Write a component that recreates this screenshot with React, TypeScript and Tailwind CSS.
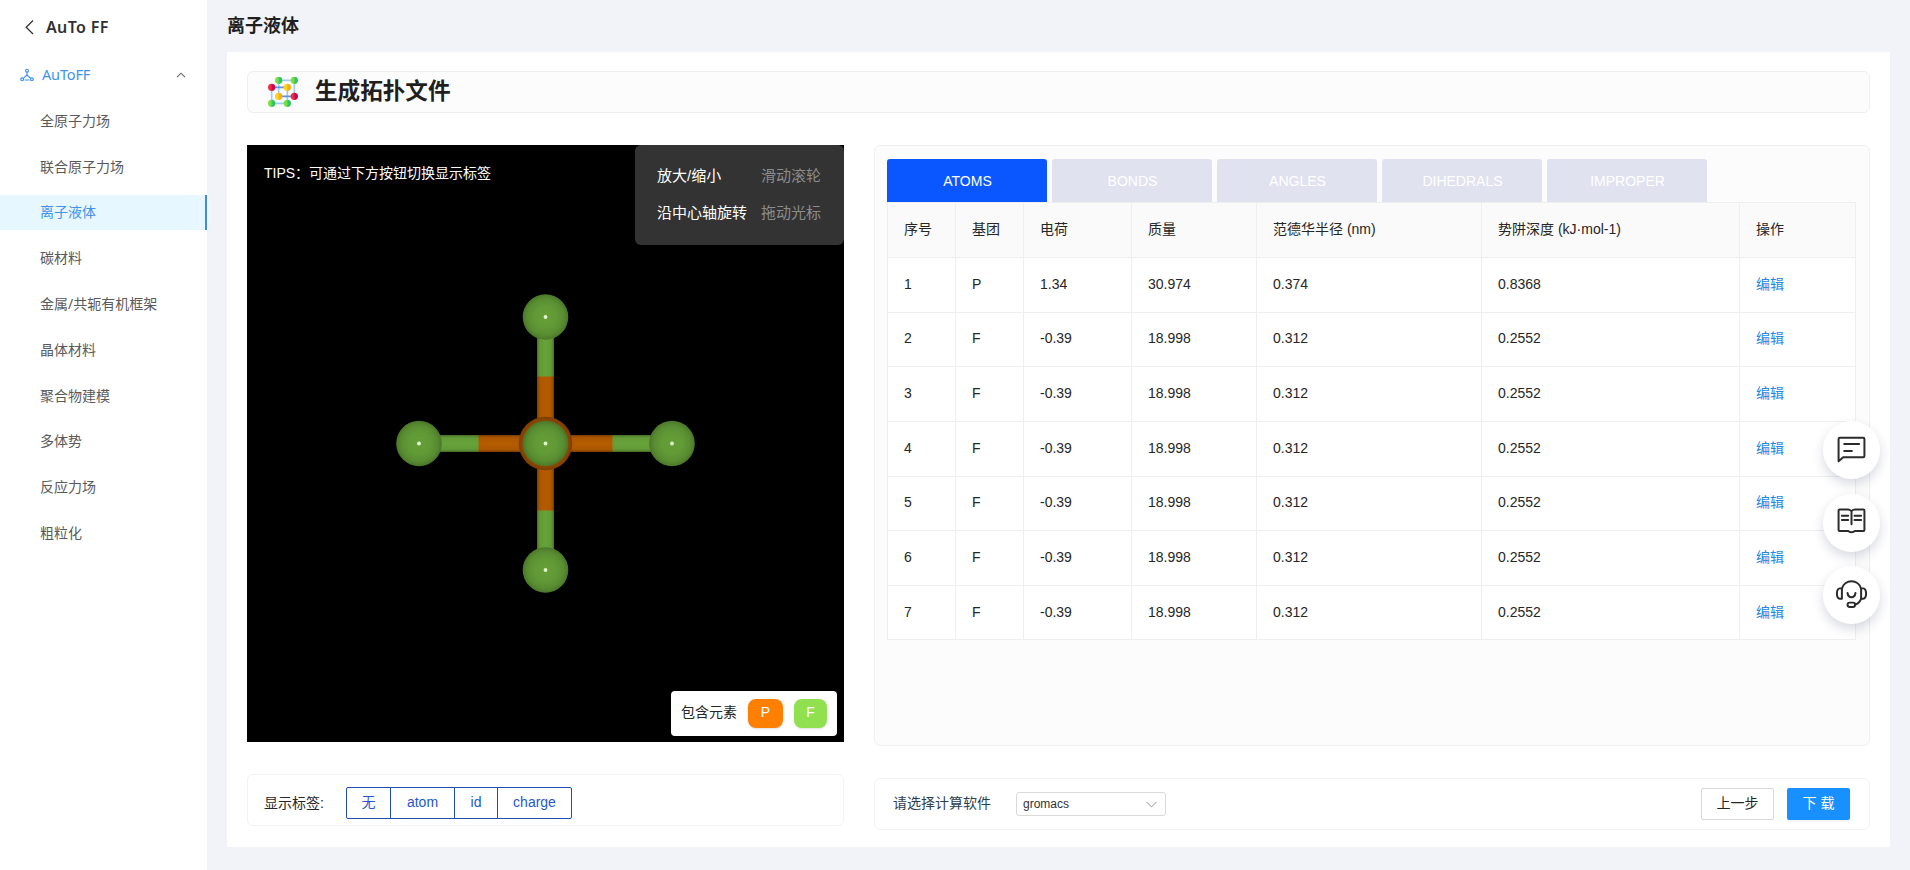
import React from "react";

const menuItems = [
  "全原子力场",
  "联合原子力场",
  "离子液体",
  "碳材料",
  "金属/共轭有机框架",
  "晶体材料",
  "聚合物建模",
  "多体势",
  "反应力场",
  "粗粒化",
];

const tabs = ["ATOMS", "BONDS", "ANGLES", "DIHEDRALS", "IMPROPER"];

const columns = ["序号", "基团", "电荷", "质量", "范德华半径 (nm)", "势阱深度 (kJ·mol-1)", "操作"];

const rows = [
  ["1", "P", "1.34", "30.974", "0.374", "0.8368"],
  ...["2", "3", "4", "5", "6", "7"].map((n) => [n, "F", "-0.39", "18.998", "0.312", "0.2552"]),
];

const gridCols = "grid grid-cols-[68px_68px_108px_125px_225px_258px_116px]";

function MoleculeNavIcon() {
  return (
    <svg className="h-[14px] w-[14px] shrink-0" viewBox="0 0 42 42" fill="none" stroke="#3f94e9" strokeWidth="3.6">
      <circle cx="21" cy="8" r="4.2" />
      <circle cx="6.5" cy="34" r="4.2" />
      <circle cx="35.5" cy="34" r="4.2" />
      <path d="M21 12v10M21 21L10 31M21 21L32 31M14 36h14" />
    </svg>
  );
}

function LatticeIcon() {
  const dots: [number, number, string][] = [
    [32, 10, "url(#lg)"],
    [79, 10, "url(#lg)"],
    [11, 31, "url(#lr)"],
    [58, 31, "url(#ly)"],
    [32, 58, "url(#ly)"],
    [79, 58, "url(#lr)"],
    [11, 79, "url(#lg)"],
    [58, 79, "url(#lg)"],
  ];
  return (
    <svg className="h-[30px] w-[30px] shrink-0" viewBox="0 0 90 90" fill="none">
      <defs>
        <linearGradient id="lg">
          <stop offset="0.35" stopColor="#7ee03f" />
          <stop offset="0.65" stopColor="#2bc662" />
        </linearGradient>
        <linearGradient id="lr">
          <stop offset="0.35" stopColor="#f02f45" />
          <stop offset="0.65" stopColor="#c4094f" />
        </linearGradient>
        <linearGradient id="ly">
          <stop offset="0.35" stopColor="#ffd21f" />
          <stop offset="0.65" stopColor="#f7ae12" />
        </linearGradient>
      </defs>
      <path d="M32 10H79V58M11 31V79H58M32 10V58M58 31V79" stroke="#a0ccf0" strokeWidth="5" />
      <path d="M11 31H58M32 58H79" stroke="#5b94e0" strokeWidth="5" />
      {dots.map(([x, y, f], i) => (
        <circle key={i} cx={x} cy={y} r="11" fill={f} />
      ))}
    </svg>
  );
}

function Molecule() {
  const ends = [
    [0, -126.5],
    [-126.5, 0],
    [126.5, 0],
    [0, 126.5],
    [0, 0],
  ];
  return (
    <svg className="block h-[597px] w-[597px]" viewBox="-298.5 -298.5 597 597">
      <defs>
        <radialGradient id="f">
          <stop offset="0" stopColor="#669f38" />
          <stop offset="0.5" stopColor="#619936" />
          <stop offset="0.8" stopColor="#588c31" />
          <stop offset="1" stopColor="#4a7629" />
        </radialGradient>
        <radialGradient id="p">
          <stop offset="0.7" stopColor="#a05000" />
          <stop offset="1" stopColor="#7c3d00" />
        </radialGradient>
        <linearGradient id="bf" x1="0" y1="0" x2="0" y2="1">
          <stop offset="0" stopColor="#4f7b2d" />
          <stop offset="0.18" stopColor="#639b37" />
          <stop offset="0.5" stopColor="#67a23a" />
          <stop offset="0.82" stopColor="#639b37" />
          <stop offset="1" stopColor="#4f7b2d" />
        </linearGradient>
        <linearGradient id="bp" x1="0" y1="0" x2="0" y2="1">
          <stop offset="0" stopColor="#884400" />
          <stop offset="0.18" stopColor="#ad5700" />
          <stop offset="0.5" stopColor="#b45b00" />
          <stop offset="0.82" stopColor="#ad5700" />
          <stop offset="1" stopColor="#884400" />
        </linearGradient>
      </defs>
      {[0, 90, 180, 270].map((a) => (
        <g key={a} transform={`rotate(${a})`}>
          <rect x="20" y="-8.4" width="47.5" height="16.8" fill="url(#bp)" />
          <rect x="67" y="-8.4" width="45" height="16.8" fill="url(#bf)" />
        </g>
      ))}
      <circle r="26.8" fill="url(#p)" />
      {ends.map(([x, y], i) => (
        <g key={i}>
          <circle cx={x} cy={y} r="22.8" fill="url(#f)" />
          <circle cx={x} cy={y} r="1.9" fill="#dff5cc" />
        </g>
      ))}
    </svg>
  );
}

function FloatButton({ children }: { children: React.ReactNode }) {
  return (
    <div className="h-[58px] w-[57px] rounded-full bg-white shadow-[0_5px_12px_rgba(40,50,90,0.18)]">
      <svg
        className="h-full w-full"
        viewBox="0 0 172 174"
        fill="none"
        stroke="#2b2b2b"
        strokeWidth="6"
        strokeLinecap="round"
        strokeLinejoin="round"
      >
        {children}
      </svg>
    </div>
  );
}

function LabelButton({ label, className }: { label: string; className: string }) {
  return (
    <button
      className={`flex h-8 items-center justify-center border border-[#1f4fb0] bg-white pb-[2px] text-sm text-[#2458cc] ${className}`}
    >
      {label}
    </button>
  );
}

export default function App() {
  return (
    <div className="relative flex h-[870px] w-[1910px] overflow-hidden bg-[#f2f3f8] font-['Liberation_Sans','Noto_Sans_CJK_SC',sans-serif] text-sm text-[#262626]">
      <aside className="flex h-full w-[207px] shrink-0 flex-col bg-white font-['Noto_Sans','Noto_Sans_CJK_SC',sans-serif]">
        <div className="flex h-[54px] items-center pl-[25px]">
          <svg className="h-4 w-2.5 shrink-0" viewBox="0 0 10 16" fill="none" stroke="#333" strokeWidth="1.3">
            <path d="M8 1.5L1.2 8.2L8 15" />
          </svg>
          <span className="ml-[11px] text-base font-semibold tracking-[0.35px] text-[#303133]">AuTo FF</span>
        </div>
        <div className="flex h-[42px] items-center pb-[1px] pl-5 text-[#3f94e9]">
          <MoleculeNavIcon />
          <span className="ml-2 w-[134px] pb-[1px] text-[14.5px] tracking-[-0.15px]">AuToFF</span>
          <svg className="h-[6px] w-[10px]" viewBox="0 0 10 6" fill="none" stroke="#666" strokeWidth="1.1">
            <path d="M1 5.2L5 1.2L9 5.2" />
          </svg>
        </div>
        <nav className="flex flex-col gap-[10.8px] pt-[7.4px]">
          {menuItems.map((m, i) => (
            <div
              key={m}
              className={
                i === 2
                  ? "flex h-[35px] items-center border-r-2 border-[#3d8ddb] bg-[#e6f7ff] pl-10 text-[#3f94e9]"
                  : "flex h-[35px] items-center pl-10 text-[#5a5a5a]"
              }
            >
              {m}
            </div>
          ))}
        </nav>
      </aside>

      <main className="flex flex-1 flex-col pr-5 pl-5">
        <h1 className="flex h-[52px] items-center text-lg font-bold text-[#1f1f1f]">离子液体</h1>
        <section className="flex h-[795px] flex-col bg-white px-5 pt-[19px]">
          <div className="flex h-[42px] items-center rounded-md border border-[#efefef] bg-[#fcfcfc] pl-5">
            <LatticeIcon />
            <h2 className="ml-[17px] text-[22.6px] leading-8 font-bold text-[#1f1f1f]">生成拓扑文件</h2>
          </div>

          <div className="mt-8 flex justify-between">
            <div className="flex w-[597px] flex-col">
              <div className="relative h-[597px] bg-black">
                <Molecule />
                <div className="absolute top-[18px] left-[17px] text-white">TIPS：可通过下方按钮切换显示标签</div>
                <div className="absolute top-0 right-0 grid h-[100px] w-[209px] grid-cols-[104px_1fr] grid-rows-[37px_37px] rounded-md bg-[#333] pt-3 pl-[22px] text-[15px] text-white">
                  <span className="self-center whitespace-nowrap">放大/缩小</span>
                  <span className="self-center text-[#8c8c8c]">滑动滚轮</span>
                  <span className="self-center whitespace-nowrap">沿中心轴旋转</span>
                  <span className="self-center text-[#8c8c8c]">拖动光标</span>
                </div>
                <div className="absolute right-[7px] bottom-[6px] flex h-[45px] w-[166px] items-center rounded bg-white pl-[10px]">
                  <span className="w-[67px] pb-[3px]">包含元素</span>
                  <span className="flex h-[29px] w-[35px] items-center justify-center rounded-lg bg-[#ff8000] pb-[3px] text-white shadow">
                    P
                  </span>
                  <span className="ml-[11px] flex h-[29px] w-[33px] items-center justify-center rounded-lg bg-[#90e050] pb-[3px] text-white shadow">
                    F
                  </span>
                </div>
              </div>
              <div className="mt-8 flex h-[52px] items-center rounded-md border border-[#f3f3f3] pl-[16px]">
                <span className="w-[82px] pt-[5px]">显示标签:</span>
                <div className="flex pt-[6px]">
                  <LabelButton label="无" className="w-[45px] rounded-l-[2px]" />
                  <LabelButton label="atom" className="-ml-px w-[65px]" />
                  <LabelButton label="id" className="-ml-px w-[44px]" />
                  <LabelButton label="charge" className="-ml-px w-[75px] rounded-r-[2px]" />
                </div>
              </div>
            </div>

            <div className="flex w-[996px] flex-col">
              <div className="h-[601px] rounded-md border border-[#efefef] bg-[#fcfcfc] pt-[13px] pl-3">
                <div className="flex gap-[5px]">
                  {tabs.map((t, i) => (
                    <div
                      key={t}
                      className={
                        i === 0
                          ? "flex h-[43px] w-[160px] items-center justify-center rounded-t-[3px] bg-[#0b57ff] pl-px text-white"
                          : "flex h-[43px] w-[160px] items-center justify-center rounded-t-[3px] bg-[#e1e2f0] pl-px text-white"
                      }
                    >
                      {t}
                    </div>
                  ))}
                </div>
                <div className="w-[969px] border-t border-l border-[#efefef]">
                  <div className={`${gridCols} h-[55px] bg-[#fafafa]`}>
                    {columns.map((c) => (
                      <div key={c} className="flex items-center border-r border-b border-[#efefef] pb-[2px] pl-4">
                        {c}
                      </div>
                    ))}
                  </div>
                  {rows.map((r) => (
                    <div key={r[0]} className={`${gridCols} h-[54.65px] bg-white`}>
                      {r.map((v, i) => (
                        <div key={i} className="flex items-center border-r border-b border-[#efefef] pb-[2px] pl-4">
                          {v}
                        </div>
                      ))}
                      <div className="flex items-center border-r border-b border-[#efefef] pb-[2px] pl-4 text-[#1e88e5]">
                        编辑
                      </div>
                    </div>
                  ))}
                </div>
              </div>

              <div className="mt-8 flex h-[52px] items-center rounded-md border border-[#f3f3f3] pr-[19px] pl-[18px]">
                <span className="w-[123px] pb-[2px] text-[#2c3e50]">请选择计算软件</span>
                <div className="flex h-6 w-[150px] items-center justify-between rounded-[3px] border border-[#d9d9d9] bg-white pr-[8px] pl-[6px] text-xs text-[#333]">
                  gromacs
                  <svg className="h-[7px] w-[11px]" viewBox="0 0 11 7" fill="none" stroke="#b5b5b5" strokeWidth="1.1">
                    <path d="M0.6 0.8L5.5 5.8L10.4 0.8" />
                  </svg>
                </div>
                <button className="ml-auto flex h-8 w-[73px] items-center justify-center rounded-[2px] border border-[#d9d9d9] bg-white pb-[2px]">
                  上一步
                </button>
                <button className="ml-[13px] flex h-8 w-[63px] items-center justify-center gap-1 rounded-[2px] bg-[#1890ff] pb-[2px] text-white shadow-[0_2px_0_rgba(0,0,0,0.04)]">
                  下 载
                </button>
              </div>
            </div>
          </div>
        </section>
      </main>

      <div className="absolute top-[421px] left-[1823px] flex flex-col gap-[14.5px]">
        <FloatButton>
          <path d="M51 50H121Q125 50 125 54V105Q125 109 121 109H61L47 121V54Q47 50 51 50Z" />
          <path d="M64 69H109M64 90H87" />
        </FloatButton>
        <FloatButton>
          <path d="M86 52Q83 46 75 46H50Q47 46 47 49V108Q47 111 50 111H76Q79 115 86 115Q93 115 96 111H122Q125 111 125 108V49Q125 46 122 46H97Q89 46 86 52V91" />
          <path d="M57 65H76M57 78H76M95 65H115M95 78H115" />
        </FloatButton>
        <FloatButton>
          <path d="M57 68A30 30 0 0 1 115 68" />
          <path d="M57 67V98H51Q42 97 42 83Q42 68 51 67Z" />
          <path d="M115 67V98H121Q130 97 130 83Q130 68 121 67Z" />
          <path d="M74 81Q76 94 86 94Q96 94 98 81" />
          <rect x="74" y="110" width="23" height="13" rx="6.5" />
          <path d="M115 98Q111 111 98 116" />
        </FloatButton>
      </div>
    </div>
  );
}
